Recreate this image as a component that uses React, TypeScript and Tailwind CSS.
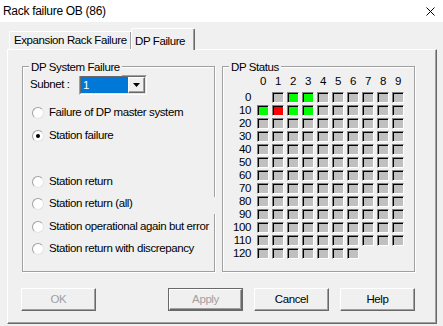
import React from "react";

const dlgFont = "font-['Liberation_Sans',Arial,sans-serif] text-[11.5px] tracking-[-0.4px] whitespace-nowrap";

type CellKind = "n" | "g" | "r" | "x";

const rows: { label: string; cells: CellKind[] }[] = [
  { label: "0", cells: ["x", "n", "g", "g", "n", "n", "n", "n", "n", "n"] },
  { label: "10", cells: ["g", "r", "g", "g", "n", "n", "n", "n", "n", "n"] },
  ...["20", "30", "40", "50", "60", "70", "80", "90", "100", "110"].map((label) => ({
    label,
    cells: Array(10).fill("n") as CellKind[],
  })),
  { label: "120", cells: ["n", "n", "n", "n", "n", "n", "n", "x", "x", "x"] },
];

function Cell({ kind }: { kind: CellKind }) {
  if (kind === "x") return <div className="h-[11px] w-[12px]" />;
  const bg = kind === "g" ? "bg-[#00ff00]" : kind === "r" ? "bg-[#ff0000]" : "bg-[#c0c0c0]";
  return (
    <div
      className={`h-[11px] w-[12px] border border-t-[#808080] border-l-[#808080] border-b-white border-r-white shadow-[inset_1px_1px_0_#000] ${bg}`}
    />
  );
}

function Radio({ label, checked }: { label: string; checked?: boolean }) {
  return (
    <div className="flex h-[22px] items-center">
      <span className="ml-[9px] flex h-[12px] w-[12px] shrink-0 items-center justify-center rounded-full border border-t-[#a0a0a0] border-l-[#a0a0a0] border-b-[#e3e3e3] border-r-[#e3e3e3] bg-white">
        {checked && <span className="h-[4px] w-[4px] rounded-full bg-black" />}
      </span>
      <span className="ml-[5px]">{label}</span>
    </div>
  );
}

function Button({ label, disabled, isDefault }: { label: string; disabled?: boolean; isDefault?: boolean }) {
  return (
    <div className={`h-[23px] w-[75px] ${isDefault ? "border border-[#696969]" : ""}`}>
      <div
        className={`flex h-full items-center justify-center border border-t-white border-l-white border-b-[#696969] border-r-[#696969] shadow-[inset_-1px_-1px_0_#a0a0a0] ${
          disabled ? "text-[#a0a0a0]" : "text-black"
        }`}
      >
        {label}
      </div>
    </div>
  );
}

export default function App() {
  return (
    <div className={`flex h-[326px] w-[443px] flex-col overflow-hidden bg-[#f0f0f0] text-black ${dlgFont}`}>
      {/* title bar */}
      <div className="flex h-[22px] items-center justify-between bg-white pl-[3px] pr-[8px]">
        <span className="text-[12px] tracking-[-0.3px]">Rack failure OB (86)</span>
        <svg width="9" height="9" viewBox="0 0 9 9">
          <path d="M0.5 0.5 L8.5 8.5 M8.5 0.5 L0.5 8.5" stroke="#000" strokeWidth="1" fill="none" />
        </svg>
      </div>

      <div className="flex flex-col px-[7px]">
        {/* tabs */}
        <div className="flex h-[27px] items-end pl-[2px]">
          <div className="flex h-[18px] w-[122px] items-center rounded-tl-[2px] border-t border-l border-t-white border-l-white pl-[4px] shadow-[inset_-1px_0_0_#a0a0a0]">
            Expansion Rack Failure
          </div>
          <div className="relative z-10 -mb-[1px] flex h-[22px] w-[64px] items-start rounded-t-[2px] border-t border-l border-r border-t-white border-l-white border-r-[#696969] bg-[#f0f0f0] pl-[3px] pt-[4px] shadow-[inset_-1px_0_0_#a0a0a0]">
            DP Failure
          </div>
        </div>

        {/* panel */}
        <div className="flex h-[275px] w-[430px] flex-col border border-t-white border-l-white border-b-[#696969] border-r-[#696969] pl-[14px] pt-[16px] shadow-[inset_-1px_-1px_0_#a0a0a0]">
          <div className="flex gap-[7px]">
            {/* DP System Failure */}
            <div className="relative flex h-[206px] w-[193px] flex-col border border-[#a0a0a0] pt-[8px] shadow-[inset_1px_1px_0_#fff,1px_1px_0_#fff]">
              <span className="absolute -top-[8px] left-[6px] bg-[#f0f0f0] px-[2px]">DP System Failure</span>
              <div className="absolute -right-[2px] top-[130px] h-[17px] w-[2px] bg-[#f0f0f0]" />
              <div className="flex h-[20px] items-center">
                <span className="ml-[7px] w-[49px]">Subnet :</span>
                <div className="h-[20px] w-[68px] border border-t-[#a0a0a0] border-l-[#a0a0a0] border-b-white border-r-white">
                  <div className="flex h-full border border-t-[#696969] border-l-[#696969] border-b-[#e3e3e3] border-r-[#e3e3e3] bg-white">
                    <div className="flex-1 bg-[#0078d7] pl-[2px] leading-[16px] text-white">1</div>
                    <div className="flex w-[17px] items-center justify-center border border-t-white border-l-white border-b-[#696969] border-r-[#696969] bg-[#f0f0f0] shadow-[inset_-1px_-1px_0_#a0a0a0]">
                      <svg width="7" height="4" viewBox="0 0 7 4">
                        <path d="M0 0 H7 L3.5 4 Z" fill="#000" />
                      </svg>
                    </div>
                  </div>
                </div>
              </div>
              <div className="mt-[7px] flex flex-col">
                <Radio label="Failure of DP master system" />
                <div className="mt-[1px]">
                  <Radio label="Station failure" checked />
                </div>
                <div className="mt-[24px]">
                  <Radio label="Station return" />
                </div>
                <Radio label="Station return (all)" />
                <div className="mt-[1px]">
                  <Radio label="Station operational again but error" />
                </div>
                <Radio label="Station return with discrepancy" />
              </div>
            </div>

            {/* DP Status */}
            <div className="relative flex h-[206px] w-[193px] flex-col border border-[#a0a0a0] pl-[8px] pt-[8px] shadow-[inset_1px_1px_0_#fff,1px_1px_0_#fff]">
              <span className="absolute -top-[8px] left-[6px] bg-[#f0f0f0] px-[2px]">DP Status</span>
              <div className="grid h-[13px] grid-cols-[23px_repeat(10,12px)] gap-x-[3px] leading-[13px]">
                <span />
                {Array.from({ length: 10 }, (_, i) => (
                  <span key={i} className="text-center">
                    {i}
                  </span>
                ))}
              </div>
              <div className="mt-[4px] grid grid-cols-[23px_repeat(10,12px)] gap-x-[3px] gap-y-[2px]">
                {rows.map((r) => (
                  <React.Fragment key={r.label}>
                    <span className="pr-[3px] text-right leading-[11px]">{r.label}</span>
                    {r.cells.map((c, i) => (
                      <Cell key={i} kind={c} />
                    ))}
                  </React.Fragment>
                ))}
              </div>
            </div>
          </div>

          {/* buttons */}
          <div className="mt-[16px] flex">
            <div className="-ml-[1px]">
              <Button label="OK" disabled />
            </div>
            <div className="ml-[72px]">
              <Button label="Apply" disabled isDefault />
            </div>
            <div className="ml-[11px]">
              <Button label="Cancel" />
            </div>
            <div className="ml-[11px]">
              <Button label="Help" />
            </div>
          </div>
        </div>
      </div>
    </div>
  );
}
